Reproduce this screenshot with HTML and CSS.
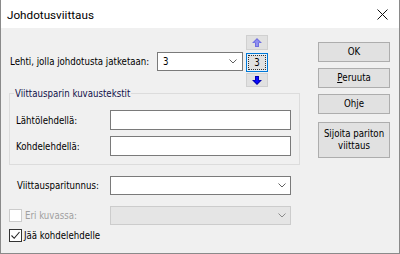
FILE: index.html
```html
<!DOCTYPE html>
<html>
<head>
<meta charset="utf-8">
<link rel="stylesheet" href="styles.css">
</head>
<body>
<div class="window">
  <div class="titlebar">
    <span class="title">Johdotusviittaus</span>
    <svg class="close" width="11" height="11" viewBox="0 0 11 11"><path d="M0.5 0.5 L10.5 10.5 M10.5 0.5 L0.5 10.5" stroke="#111" stroke-width="1" fill="none"/></svg>
  </div>
  <div class="content">
    <div class="main">
      <div class="row1">
        <span class="lbl lbl-sheet">Lehti, jolla johdotusta jatketaan:</span>
        <div class="combo combo-sheet"><span class="val">3</span><svg class="chev" width="8" height="5" viewBox="0 0 8 5"><path d="M0.5 0.5 L4 4 L7.5 0.5" stroke="#606060" fill="none"/></svg></div>
        <div class="spinner">
          <div class="spin-btn spin-up"><svg width="10" height="9" viewBox="0 0 10 9"><path d="M5 0 L10 5 L7 5 L7 9 L3 9 L3 5 L0 5 Z" fill="#6f6fe0"/><path d="M5 1.5 L8 4.5 L6 4.5 L6 8 L4 8 L4 4.5 L2 4.5 Z" fill="#9090f0"/></svg></div>
          <div class="spin-val"><span class="focus">3</span></div>
          <div class="spin-btn spin-down"><svg width="10" height="9" viewBox="0 0 10 9"><path d="M5 9 L10 4 L7 4 L7 0 L3 0 L3 4 L0 4 Z" fill="#0000b0"/><path d="M5 7.5 L8 4.5 L6 4.5 L6 1 L4 1 L4 4.5 L2 4.5 Z" fill="#0a0aff"/></svg></div>
        </div>
      </div>
      <fieldset class="group">
        <legend class="legend">Viittausparin kuvaustekstit</legend>
        <div class="grow">
          <span class="lbl lbl-g">Lähtölehdellä:</span>
          <div class="input"></div>
        </div>
        <div class="grow grow2">
          <span class="lbl lbl-g">Kohdelehdellä:</span>
          <div class="input"></div>
        </div>
      </fieldset>
      <div class="row row-pair">
        <span class="lbl lbl-pair">Viittausparitunnus:</span>
        <div class="combo combo-wide"><svg class="chev" width="8" height="5" viewBox="0 0 8 5"><path d="M0.5 0.5 L4 4 L7.5 0.5" stroke="#606060" fill="none"/></svg></div>
      </div>
      <div class="row row-eri">
        <span class="check disabled"></span>
        <span class="lbl lbl-eri">Eri kuvassa:</span>
        <div class="combo combo-wide combo-dis"><svg class="chev" width="8" height="5" viewBox="0 0 8 5"><path d="M0.5 0.5 L4 4 L7.5 0.5" stroke="#8a8a8a" fill="none"/></svg></div>
      </div>
      <div class="row row-jaa">
        <span class="check checked"><svg width="11" height="11" viewBox="0 0 11 11"><path d="M1.5 5.5 L4.2 8.3 L9.5 2" stroke="#222" stroke-width="1.1" fill="none"/></svg></span>
        <span class="lbl lbl-jaa">Jää kohdelehdelle</span>
      </div>
    </div>
    <div class="buttons">
      <div class="btn">OK</div>
      <div class="btn"><span class="ul">P</span>eruuta</div>
      <div class="btn">Ohje</div>
      <div class="btn btn-tall">Sijoita pariton<br>viittaus</div>
    </div>
  </div>
</div>
</body>
</html>
```
FILE: styles.css
```css
* { box-sizing: border-box; }
html, body { margin: 0; padding: 0; }
body {
  width: 400px;
  height: 254px;
  overflow: hidden;
  font-family: "DejaVu Sans Condensed", "DejaVu Sans", sans-serif;
  font-stretch: condensed;
  font-size: 9.6px;
  color: #000;
}
.window {
  width: 400px;
  height: 254px;
  background: #f0f0f0;
  border-left: 1px solid #8a8a8a;
  border-right: 1px solid #8a8a8a;
  border-bottom: 1px solid #8a8a8a;
  display: flex;
  flex-direction: column;
}
.titlebar {
  height: 28px;
  background: #fff;
  display: flex;
  align-items: center;
  justify-content: space-between;
  padding-left: 6px;
  padding-right: 11px;
  flex: none;
}
.title {
  font-family: Roboto, "Noto Sans", sans-serif;
  font-stretch: normal;
  font-size: 11.7px;
  color: #000;
  padding-top: 1px;
}
.close { display: block; }
.content {
  display: flex;
  padding-top: 7px;
}
.main {
  width: 317px;
  flex: none;
  display: flex;
  flex-direction: column;
}
.lbl { white-space: nowrap; line-height: 13px; }
.row1 {
  display: flex;
  align-items: center;
  height: 52px;
}
.lbl-sheet {
  width: 156px;
  flex: none;
  padding-left: 9px;
}
.combo {
  background: #fff;
  border: 1px solid #7a7a7a;
  display: flex;
  align-items: center;
  justify-content: space-between;
  padding: 0 5px 0 5px;
  flex: none;
}
.combo-sheet {
  width: 86px;
  height: 19px;
}
.combo-wide {
  width: 181px;
  height: 19px;
  justify-content: flex-end;
  padding-right: 4px;
}
.combo-dis {
  background: #e5e5e5;
  border-color: #cccccc;
}
.chev { display: block; }
.spinner {
  margin-left: 3px;
  width: 22px;
  flex: none;
  display: flex;
  flex-direction: column;
}
.spin-btn {
  background: #e1e1e1;
  border: 1px solid #d0d0d0;
  display: flex;
  align-items: center;
  justify-content: center;
}
.spin-up { height: 15px; }
.spin-down { height: 14px; margin-top: 1px; }
.spin-btn svg { display: block; }
.spin-val {
  height: 19px;
  margin-top: 3px;
  border: 1px solid #0078d7;
  background: #e5f1fb;
  padding: 1px;
  display: flex;
}
.focus {
  flex: 1;
  border: 1px dotted #333;
  display: flex;
  align-items: center;
  justify-content: center;
  background: #e1e1e1;
  line-height: 13px;
}
.group {
  margin: 0 0 0 8px;
  width: 291px;
  border: 1px solid #dcdcdc;
  padding: 10px 8px 8px 6px;
  min-width: 0;
}
.legend {
  padding: 0 1px;
  margin-left: -2px;
  line-height: 13px;
  color: #10104a;
}
.grow {
  display: flex;
  align-items: center;
}
.grow2 { margin-top: 6px; }
.lbl-g { width: 94px; flex: none; }
.input {
  width: 181px;
  height: 20px;
  background: #fff;
  border: 1px solid #7a7a7a;
  flex: none;
}
.row {
  display: flex;
  align-items: center;
}
.row-pair { margin-top: 11px; }
.lbl-pair { width: 109px; flex: none; padding-left: 16px; }
.row-eri { margin-top: 11px; }
.check {
  width: 13px;
  height: 13px;
  border: 1px solid #333;
  background: #fff;
  margin-left: 8px;
  flex: none;
  display: flex;
  align-items: center;
  justify-content: center;
}
.check svg { display: block; }
.check.disabled { border-color: #cccccc; }
.lbl-eri { width: 88px; flex: none; padding-left: 3px; color: #a0a0a0; }
.row-jaa { margin-top: 4px; }
.lbl-jaa { padding-left: 2px; }
.buttons {
  margin-left: 0;
  padding-top: 7px;
  display: flex;
  flex-direction: column;
  width: 72px;
}
.btn {
  height: 20px;
  background: #e1e1e1;
  border: 1px solid #adadad;
  display: flex;
  align-items: center;
  justify-content: center;
  text-align: center;
  line-height: 12px;
  margin-bottom: 6px;
}
.btn-tall {
  height: 36px;
  margin-top: 2px;
}
.ul { text-decoration: underline; }
```
